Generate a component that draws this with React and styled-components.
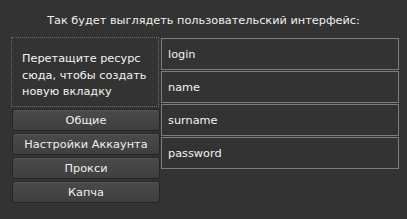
import React from "react";
import styled, { createGlobalStyle } from "styled-components";

const GlobalStyle = createGlobalStyle`
  html, body {
    margin: 0;
    padding: 0;
    background: #333333;
  }
  body {
    font-family: "DejaVu Sans", Verdana, sans-serif;
    color: #f0f0f0;
  }
`;

const fields = ["login", "name", "surname", "password"];
const tabs = ["Общие", "Настройки Аккаунта", "Прокси", "Капча"];

const App = () => {
  return (
    <>
      <GlobalStyle />
      <Wrapper>
        <Title>Так будет выглядеть пользовательский интерфейс:</Title>
        <Columns>
          <Left>
            <DropZone>
              Перетащите ресурс
              <br />
              сюда, чтобы создать
              <br />
              новую вкладку
            </DropZone>
            {tabs.map((t) => (
              <TabButton key={t}>{t}</TabButton>
            ))}
          </Left>
          <Right>
            {fields.map((f) => (
              <Field key={f}>{f}</Field>
            ))}
          </Right>
        </Columns>
      </Wrapper>
    </>
  );
};

const Wrapper = styled.div`
  width: 407px;
  height: 219px;
  box-sizing: border-box;
  padding: 13px 8px 0 11px;
`;

const Title = styled.div`
  text-align: center;
  font-size: 11.3px;
  line-height: 16px;
  margin-left: -11px;
  margin-right: -8px;
  height: 24px;
`;

const Columns = styled.div`
  display: flex;
  gap: 2px;
  align-items: flex-start;
`;

const Left = styled.div`
  width: 148px;
  display: flex;
  flex-direction: column;
  gap: 2px;
`;

const DropZone = styled.div`
  box-sizing: border-box;
  height: 70px;
  border: 1px dotted #6a6a6a;
  padding: 13px 0 0 10px;
  font-size: 11.3px;
  line-height: 16.5px;
  color: #f4f4f4;
`;

const TabButton = styled.button`
  box-sizing: border-box;
  height: 22px;
  margin-left: 1px;
  width: 148px;
  border: 1px solid #262626;
  border-radius: 3px;
  background: linear-gradient(#4a4a4a, #3f3f3f);
  box-shadow: inset 0 1px 0 #555555;
  color: #f0f0f0;
  font-family: "DejaVu Sans", Verdana, sans-serif;
  font-size: 11.3px;
  padding: 0;
  cursor: pointer;
`;

const Right = styled.div`
  width: 238px;
  margin-top: 1px;
  display: flex;
  flex-direction: column;
  gap: 1px;
`;

const Field = styled.div`
  box-sizing: border-box;
  height: 32px;
  border: 1px solid #7c7c7c;
  padding: 0 0 0 6px;
  display: flex;
  align-items: center;
  font-size: 11.3px;
  color: #f4f4f4;
`;

export default App;
